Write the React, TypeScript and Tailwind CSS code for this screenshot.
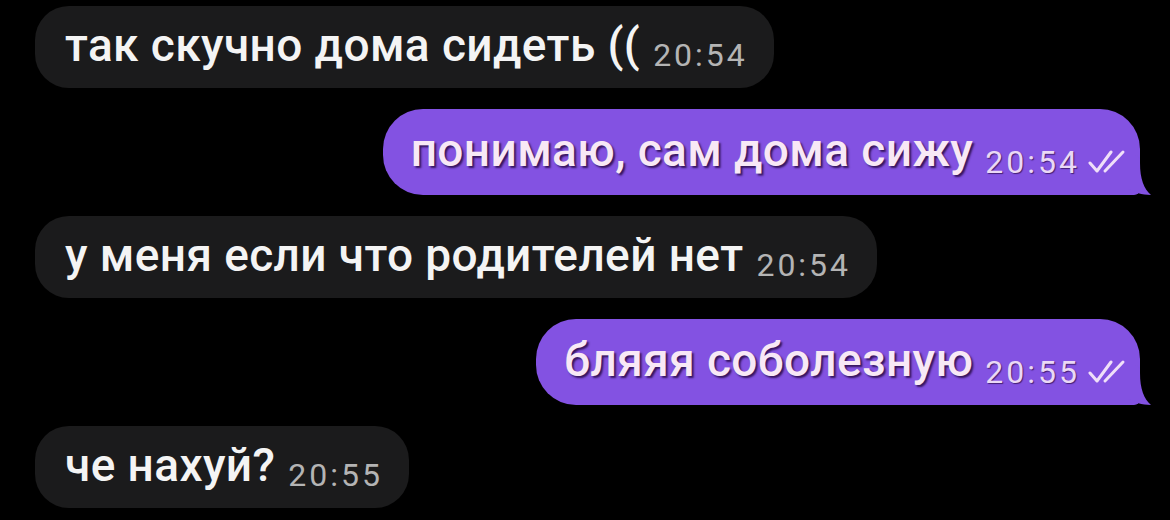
import React from "react";

function Checks({ color }: { color: string }) {
  return (
    <svg width="38" height="26" viewBox="0 0 38 26" fill="none" className="ml-[8px] shrink-0">
      <path d="M2 14 L9 22 L23 3" stroke={color} strokeWidth="3" strokeLinecap="round" strokeLinejoin="round" />
      <path d="M17 22 L35 3" stroke={color} strokeWidth="3" strokeLinecap="round" />
    </svg>
  );
}

function Left({ text, time }: { text: string; time: string }) {
  return (
    <div className="self-start h-[82px] rounded-[34px] bg-[#1b1b1c] flex items-center pl-[30px] pr-[26px] pb-[4px]">
      <span className="text-[46px] font-medium leading-none text-[#f4f4f4] tracking-[0.4px] whitespace-nowrap">{text}</span>
      <span className="self-end mb-[13px] ml-[13px] text-[32px] leading-none text-[#b4b4b4] tracking-[3px] whitespace-nowrap">{time}</span>
    </div>
  );
}

function Right({ text, time }: { text: string; time: string }) {
  return (
    <div className="self-end relative mr-[30px]">
      <div className="h-[86px] rounded-[40px] rounded-br-[6px] bg-[#8352e2] flex items-center pl-[28px] pr-[14px] pb-[4px]">
        <span className="text-[46px] font-medium leading-none text-[#f8e8f6] tracking-[0.4px] whitespace-nowrap [text-shadow:2px_2px_2px_rgba(40,10,70,0.85)]">
          {text}
        </span>
        <span className="self-end mb-[13px] ml-[12px] flex items-center text-[32px] leading-none text-[#ead8f6] tracking-[3px] whitespace-nowrap [text-shadow:1px_1px_1px_rgba(40,10,70,0.7)]">
          {time}
          <Checks color="#f0e0f8" />
        </span>
      </div>
      <svg width="24" height="40" viewBox="0 0 24 40" className="absolute right-[-12px] bottom-0">
        <path d="M0 0 L6 0 C10 0 12 2 12 8 C12 24 16 34 23 40 C14 40 6 37 0 34 Z" fill="#8352e2" />
      </svg>
    </div>
  );
}

export default function App() {
  return (
    <div
      className="w-[1170px] h-[520px] bg-black overflow-hidden flex flex-col pt-[6px] pl-[35px] gap-[21px]"
      style={{ fontFamily: "Roboto, 'Noto Sans', sans-serif" }}
    >
      <Left text="так скучно дома сидеть ((" time="20:54" />
      <Right text="понимаю, сам дома сижу" time="20:54" />
      <Left text="у меня если что родителей нет" time="20:54" />
      <Right text="бляяя соболезную" time="20:55" />
      <Left text="че нахуй?" time="20:55" />
    </div>
  );
}
